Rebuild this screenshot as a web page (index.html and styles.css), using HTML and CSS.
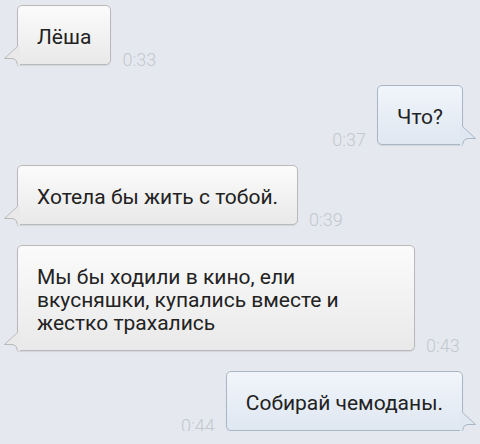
FILE: index.html
```html
<!DOCTYPE html>
<html lang="ru">

<head>
    <meta charset="UTF-8">
    <meta name="viewport" content="width=device-width, initial-scale=1.0">
    <title>Сообщения</title>
    <link rel="stylesheet" href="styles.css">
</head>

<body>
    <div class="chat">
        <div class="msg in">
            <div class="bubble">Лёша
                <svg class="tail" width="18" height="20" viewBox="0 0 18 20"><path class="tail-fill" d="M17 1.5 L14.5 1.5 L1.5 13.5 L10 13.5 Q14 14.5 14.5 20 L17 20 Z"/><path class="tail-line" d="M14.5 1.5 L1.5 13.5 L10 13.5 Q14 14.5 14.5 19.5"/></svg>
            </div>
            <span class="time">0:33</span>
        </div>
        <div class="msg out">
            <span class="time">0:37</span>
            <div class="bubble">Что?
                <svg class="tail" width="18" height="20" viewBox="0 0 18 20"><path class="tail-fill" d="M17 1.5 L14.5 1.5 L1.5 13.5 L10 13.5 Q14 14.5 14.5 20 L17 20 Z"/><path class="tail-line" d="M14.5 1.5 L1.5 13.5 L10 13.5 Q14 14.5 14.5 19.5"/></svg>
            </div>
        </div>
        <div class="msg in">
            <div class="bubble">Хотела бы жить с тобой.
                <svg class="tail" width="18" height="20" viewBox="0 0 18 20"><path class="tail-fill" d="M17 1.5 L14.5 1.5 L1.5 13.5 L10 13.5 Q14 14.5 14.5 20 L17 20 Z"/><path class="tail-line" d="M14.5 1.5 L1.5 13.5 L10 13.5 Q14 14.5 14.5 19.5"/></svg>
            </div>
            <span class="time">0:39</span>
        </div>
        <div class="msg in">
            <div class="bubble">Мы бы ходили в кино, ели вкусняшки, купались вместе и жестко трахались
                <svg class="tail" width="18" height="20" viewBox="0 0 18 20"><path class="tail-fill" d="M17 1.5 L14.5 1.5 L1.5 13.5 L10 13.5 Q14 14.5 14.5 20 L17 20 Z"/><path class="tail-line" d="M14.5 1.5 L1.5 13.5 L10 13.5 Q14 14.5 14.5 19.5"/></svg>
            </div>
            <span class="time">0:43</span>
        </div>
        <div class="msg out">
            <span class="time">0:44</span>
            <div class="bubble">Собирай чемоданы.
                <svg class="tail" width="18" height="20" viewBox="0 0 18 20"><path class="tail-fill" d="M17 1.5 L14.5 1.5 L1.5 13.5 L10 13.5 Q14 14.5 14.5 20 L17 20 Z"/><path class="tail-line" d="M14.5 1.5 L1.5 13.5 L10 13.5 Q14 14.5 14.5 19.5"/></svg>
            </div>
        </div>
    </div>
</body>

</html>
```

FILE: styles.css
```css
    body {
        font-family: Roboto, "Liberation Sans", sans-serif;
        margin: 0;
        padding: 0;
        background-color: #e5e9ef;
    }

    .chat {
        display: flex;
        flex-direction: column;
        gap: 20px;
        padding: 5px 17px 0 17px;
    }

    .msg {
        display: flex;
        align-items: flex-end;
    }

    .msg.out {
        justify-content: flex-end;
    }

    .bubble {
        position: relative;
        max-width: 398px;
        box-sizing: border-box;
        padding: 20px 19px 15px 19px;
        font-size: 21px;
        line-height: 23px;
        color: #222222;
        border: 1px solid #b9b9b9;
        border-radius: 5px;
        background: linear-gradient(#fbfbfb, #e9e9e9);
        box-shadow: 0 1px 1px rgba(0, 0, 0, 0.08);
    }

    .in .bubble {
        border-bottom-left-radius: 0;
    }

    .out .bubble {
        border-bottom-right-radius: 0;
        border-color: #a9b6c6;
        background: linear-gradient(#f1f5fb, #dfe7f1);
    }

    .tail {
        position: absolute;
        bottom: -1px;
        left: -15px;
        display: block;
    }

    .out .tail {
        left: auto;
        right: -15px;
        transform: scaleX(-1);
    }

    .tail-fill {
        fill: #e9e9e9;
    }

    .tail-line {
        fill: none;
        stroke: #b9b9b9;
        stroke-width: 1;
    }

    .out .tail-fill {
        fill: #dfe7f1;
    }

    .out .tail-line {
        stroke: #a9b6c6;
    }

    .time {
        font-size: 18px;
        font-weight: 300;
        line-height: 1;
        color: #c3c7ce;
        margin-bottom: -4px;
    }

    .in .time {
        margin-left: 11px;
    }

    .out .time {
        margin-right: 11px;
    }
```
